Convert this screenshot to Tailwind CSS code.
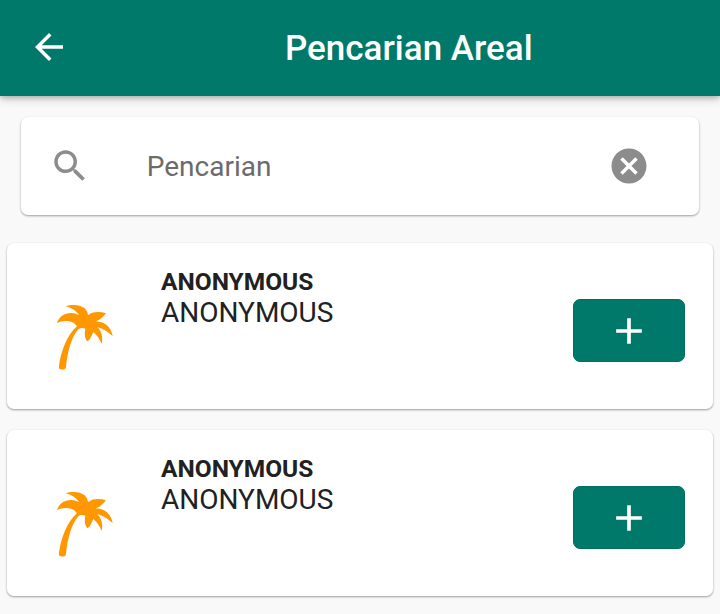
<!DOCTYPE html>
<html lang="id">
<head>
<meta charset="utf-8">
<title>Pencarian Areal</title>
<script src="https://cdn.jsdelivr.net/npm/@tailwindcss/browser@4"></script>
</head>
<body class="h-[614px] overflow-hidden bg-[#f9f9f9] font-[Roboto,sans-serif] text-[#212121]">
<svg class="hidden">
  <symbol id="palm" viewBox="0 0 240 255"><path d="M61 34C80 27 105 28 119 40C127 48 128 54 129 61C138 51 163 48 183 55C175 65 166 75 152 79C181 80 199 98 203 123C189 111 174 101 157 96C171 110 174 128 170 147C164 133 156 120 145 111C140 122 136 132 128 139C119 132 118 116 121 101C114 98 105 99 100 103C80 126 68 166 63 216C62 223 55 225 48 223C42 222 41 218 42 212C47 172 66 118 96 94C91 86 81 80 71 79C57 77 46 80 36 84C42 64 61 53 79 54C89 54 96 57 102 61C94 47 79 38 61 34Z"/></symbol>
  <symbol id="plus" viewBox="0 0 24 24"><path d="M19 13h-6v6h-2v-6H5v-2h6V5h2v6h6v2z"/></symbol>
</svg>
<header class="relative flex h-24 items-center bg-[#00796b] text-white shadow-[0_3px_9px_rgba(0,0,0,0.2),0_2px_4px_rgba(0,0,0,0.14)]">
  <svg class="ml-7 mb-[2px] size-[42px]" viewBox="0 0 24 24" fill="currentColor"><path d="M20 11H7.83l5.59-5.59L12 4l-8 8 8 8 1.41-1.41L7.83 13H20v-2z"/></svg>
  <h1 class="ml-[215px] pt-[2px] text-[35px] leading-[42px] font-medium">Pencarian Areal</h1>
</header>
<main class="flex flex-col px-[7px]">
  <div class="mx-[14px] mt-[21px] flex h-[98px] items-center rounded-[7px] bg-white shadow-[0_1px_2px_rgba(0,0,0,0.28),0_1px_3px_rgba(0,0,0,0.12)]">
    <svg class="ml-[27.75px] size-[42px] text-[#8c8c8c]" viewBox="0 0 24 24" fill="currentColor"><path d="M15.5 14h-.79l-.28-.27C15.41 12.59 16 11.11 16 9.5 16 5.91 13.09 3 9.5 3S3 5.91 3 9.5 5.91 16 9.5 16c1.61 0 3.09-.59 4.23-1.57l.27.28v.79l5 4.99L20.49 19l-4.99-5zm-6 0C7.01 14 5 11.99 5 9.5S7.01 5 9.5 5 14 7.01 14 9.5 11.99 14 9.5 14z"/></svg>
    <span class="ml-[56px] flex-1 pt-[2px] text-[28px] leading-8 text-[#6b6b6b]">Pencarian</span>
    <svg class="mr-[49px] size-[42px] text-[#8c8c8c]" viewBox="0 0 24 24" fill="currentColor"><path d="M12 2C6.47 2 2 6.47 2 12s4.47 10 10 10 10-4.47 10-10S17.53 2 12 2zm5 13.59L15.59 17 12 13.41 8.41 17 7 15.59 10.59 12 7 8.41 8.41 7 12 10.59 15.59 7 17 8.41 13.41 12 17 15.59z"/></svg>
  </div>
  <section class="mt-[28px] flex h-[166px] rounded-[7px] bg-white shadow-[0_1px_2px_rgba(0,0,0,0.28),0_1px_3px_rgba(0,0,0,0.12)]">
    <svg class="mt-[52px] ml-[38px] h-[85px] w-[80px]" fill="#ff9800"><use href="#palm"/></svg>
    <div class="mt-[24px] ml-[36px] flex-1">
      <p class="text-[24.5px] leading-[29px] font-bold">ANONYMOUS</p>
      <p class="mt-px text-[28px] leading-8">ANONYMOUS</p>
    </div>
    <button class="mt-[56px] mr-[28px] flex h-[63px] w-[112px] items-center justify-center rounded-[7px] border border-[#006e61] bg-[#00796b] text-white"><svg class="size-[44px]" fill="currentColor"><use href="#plus"/></svg></button>
  </section>
  <section class="mt-[21px] flex h-[166px] rounded-[7px] bg-white shadow-[0_1px_2px_rgba(0,0,0,0.28),0_1px_3px_rgba(0,0,0,0.12)]">
    <svg class="mt-[52px] ml-[38px] h-[85px] w-[80px]" fill="#ff9800"><use href="#palm"/></svg>
    <div class="mt-[24px] ml-[36px] flex-1">
      <p class="text-[24.5px] leading-[29px] font-bold">ANONYMOUS</p>
      <p class="mt-px text-[28px] leading-8">ANONYMOUS</p>
    </div>
    <button class="mt-[56px] mr-[28px] flex h-[63px] w-[112px] items-center justify-center rounded-[7px] border border-[#006e61] bg-[#00796b] text-white"><svg class="size-[44px]" fill="currentColor"><use href="#plus"/></svg></button>
  </section>
</main>
</body>
</html>
